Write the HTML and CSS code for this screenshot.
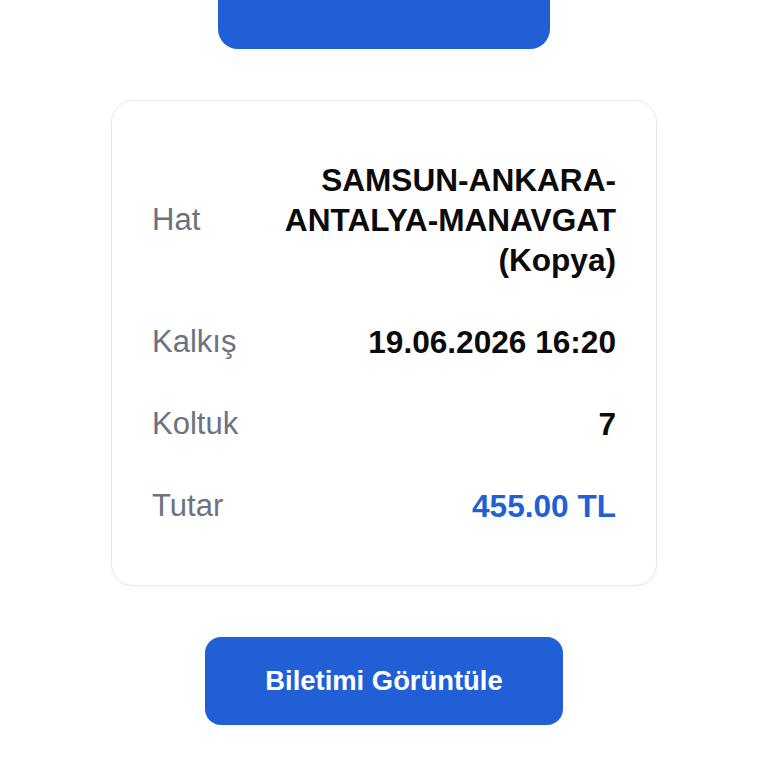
FILE: index.html
```html
<!DOCTYPE html>
<html lang="tr">
<head>
    <meta charset="UTF-8">
    <meta name="viewport" content="width=device-width, initial-scale=1.0">
    <title>Bilet Özeti</title>
    <link rel="stylesheet" href="styles.css">
</head>
<body>
    <main class="page">
        <!-- Önceki bölümün butonu (kaydırılmış) -->
        <div class="top-action"></div>

        <!-- Bilet detayları -->
        <section class="ticket-card">
            <div class="row">
                <span class="label">Hat</span>
                <span class="value">SAMSUN-ANKARA-ANTALYA-MANAVGAT (Kopya)</span>
            </div>
            <div class="row">
                <span class="label">Kalkış</span>
                <span class="value">19.06.2026 16:20</span>
            </div>
            <div class="row">
                <span class="label">Koltuk</span>
                <span class="value">7</span>
            </div>
            <div class="row">
                <span class="label">Tutar</span>
                <span class="value price">455.00 TL</span>
            </div>
        </section>

        <button class="view-ticket">Biletimi Görüntüle</button>
    </main>
</body>
</html>
```

FILE: styles.css
```css
:root {
    --primary: #215fd7;
    --label-color: #6b7280;
    --text-color: #0b0b0b;
    --border-color: #e7e8eb;
    --font-family: "Liberation Sans", Arial, sans-serif;
}

* {
    margin: 0;
    padding: 0;
    box-sizing: border-box;
}

body {
    background: #ffffff;
    font-family: var(--font-family);
    color: var(--text-color);
    overflow: hidden;
}

.page {
    display: flex;
    flex-direction: column;
    align-items: center;
    gap: 51px;
    margin-top: -39px;
}

.top-action {
    width: 332px;
    height: 88px;
    background: var(--primary);
    border-radius: 20px;
}

.ticket-card {
    width: 546px;
    padding: 38px 40px;
    border: 1px solid var(--border-color);
    border-radius: 22px;
    background: #fff;
    box-shadow: 0 2px 4px rgba(0, 0, 0, 0.03);
}

.row {
    display: flex;
    align-items: center;
    justify-content: space-between;
    gap: 24px;
    padding: 21px 0;
}

.label {
    flex-shrink: 0;
    font-size: 31px;
    color: var(--label-color);
}

.value {
    flex: 1;
    text-align: right;
    font-size: 31.6px;
    font-weight: 700;
    line-height: 40px;
}

.price {
    color: var(--primary);
}

.view-ticket {
    width: 358px;
    height: 88px;
    border: none;
    border-radius: 16px;
    background: var(--primary);
    color: #fff;
    font-family: var(--font-family);
    font-size: 27.4px;
    font-weight: 700;
    cursor: pointer;
}
```
